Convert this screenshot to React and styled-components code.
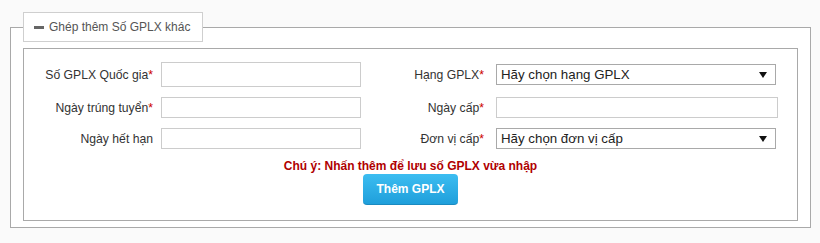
import React from 'react';
import styled, { createGlobalStyle } from 'styled-components';

const GlobalStyle = createGlobalStyle`
  body {
    margin: 0;
    background: #fafafa;
    font-family: "Liberation Sans", Arial, sans-serif;
  }
`;

const Fieldset = styled.fieldset`
  margin: 12px 9px 0 10px;
  padding: 6px 12px 6px 12px;
  border: 1px solid #a9a9a9;
  background: #fff;
  min-width: 0;
`;

const Legend = styled.legend`
  padding: 6px 12px 6px 10px;
  border: 1px solid #cfcfcf;
  background: #fff;
  font-size: 12px;
  line-height: 16px;
  color: #555;
  display: flex;
  align-items: center;
`;

const Minus = styled.span`
  display: inline-block;
  width: 10px;
  height: 3px;
  background: #666;
  margin-right: 5px;
`;

const Box = styled.div`
  border: 1px solid #a9a9a9;
  background: #fff;
  padding: 13px 0 15px;
  display: flex;
  flex-direction: column;
  align-items: center;
`;

const Grid = styled.div`
  align-self: stretch;
  display: grid;
  grid-template-columns: 137px 200px 135px 282px;
  row-gap: 10px;
  align-items: center;
`;

const Label = styled.label`
  text-align: right;
  padding-right: ${(p) => (p.$right ? 12 : 8)}px;
  font-size: 12.2px;
  color: #333;
  white-space: nowrap;
`;

const Star = styled.span`
  color: #c00;
`;

const Input = styled.input`
  box-sizing: border-box;
  width: ${(p) => p.$w || 200}px;
  height: ${(p) => p.$h || 21}px;
  border: 1px solid #ccc;
  margin: 0;
  padding: 2px 4px;
  font-size: 13px;
  background: #fff;
`;

const SelectWrap = styled.div`
  position: relative;
  width: 280px;
  height: 21px;

  &::after {
    content: '';
    position: absolute;
    right: 9px;
    top: 8px;
    border-left: 4px solid transparent;
    border-right: 4px solid transparent;
    border-top: 6px solid #111;
    pointer-events: none;
  }
`;

const Select = styled.select`
  appearance: none;
  box-sizing: border-box;
  width: 100%;
  height: 100%;
  margin: 0;
  border: 1px solid #a9a9a9;
  border-radius: 0;
  background: #fff;
  padding: 0 20px 0 4px;
  font-family: "Liberation Sans", Arial, sans-serif;
  font-size: 13.3px;
  color: #222;
`;

const Note = styled.div`
  margin-top: 9px;
  font-size: 12px;
  line-height: 16px;
  font-weight: bold;
  color: #b00000;
`;

const Button = styled.button`
  width: 95px;
  height: 31px;
  border: none;
  border-bottom: 1px solid #1a8ac0;
  border-radius: 4px;
  background: linear-gradient(#3cbdf1, #1f9fdb);
  color: #fff;
  font-family: "Liberation Sans", Arial, sans-serif;
  font-size: 12px;
  font-weight: bold;
  cursor: pointer;
`;

const Req = ({ children }) => (
  <>
    {children}
    <Star>*</Star>
  </>
);

export default function App() {
  return (
    <>
      <GlobalStyle />
      <Fieldset>
        <Legend>
          <Minus />
          Ghép thêm Số GPLX khác
        </Legend>
        <Box>
          <Grid>
            <Label>
              <Req>Số GPLX Quốc gia</Req>
            </Label>
            <Input $h={25} />
            <Label $right>
              <Req>Hạng GPLX</Req>
            </Label>
            <SelectWrap>
              <Select defaultValue="">
                <option value="">Hãy chọn hạng GPLX</option>
              </Select>
            </SelectWrap>

            <Label>
              <Req>Ngày trúng tuyển</Req>
            </Label>
            <Input />
            <Label $right>
              <Req>Ngày cấp</Req>
            </Label>
            <Input $w={282} />

            <Label>Ngày hết hạn</Label>
            <Input />
            <Label $right>
              <Req>Đơn vị cấp</Req>
            </Label>
            <SelectWrap>
              <Select defaultValue="">
                <option value="">Hãy chọn đơn vị cấp</option>
              </Select>
            </SelectWrap>
          </Grid>
          <Note>Chú ý: Nhấn thêm để lưu số GPLX vừa nhập</Note>
          <Button>Thêm GPLX</Button>
        </Box>
      </Fieldset>
    </>
  );
}
